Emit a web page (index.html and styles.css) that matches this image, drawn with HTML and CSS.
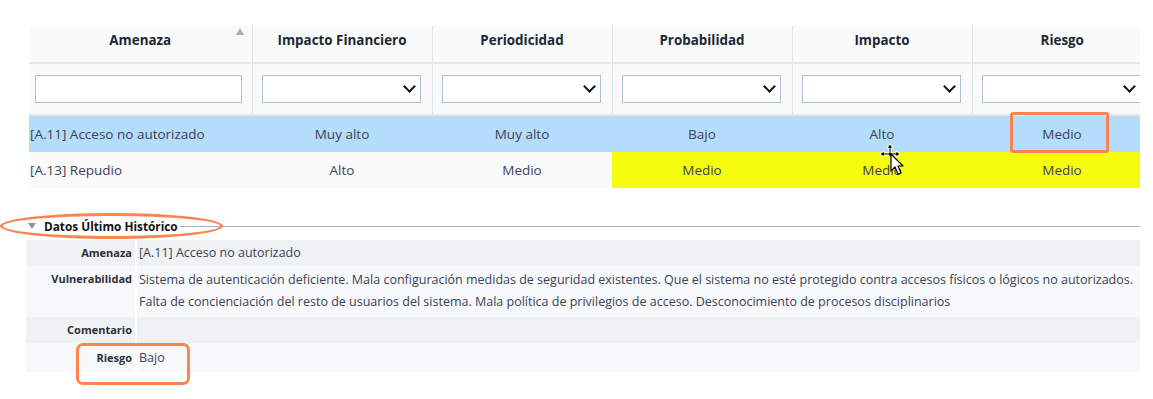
FILE: index.html
```html
<!DOCTYPE html>
<html lang="es">
<head>
    <meta charset="UTF-8">
    <title>Análisis de riesgos</title>
    <link rel="stylesheet" href="styles.css">
</head>
<body>
    <div class="page">
        <div class="grid-wrap">
            <table class="grid">
                <colgroup>
                    <col class="col-main">
                    <col class="col-level">
                    <col class="col-level">
                    <col class="col-level">
                    <col class="col-level">
                    <col class="col-level">
                </colgroup>
                <thead>
                    <tr class="head">
                        <th class="sortable">Amenaza <span class="sort-icon"></span></th>
                        <th>Impacto Financiero</th>
                        <th>Periodicidad</th>
                        <th>Probabilidad</th>
                        <th>Impacto</th>
                        <th>Riesgo</th>
                    </tr>
                    <tr class="filters">
                        <td><input type="text" class="filter-input"></td>
                        <td><div class="select-box"><select class="filter-select"><option></option></select></div></td>
                        <td><div class="select-box"><select class="filter-select"><option></option></select></div></td>
                        <td><div class="select-box"><select class="filter-select"><option></option></select></div></td>
                        <td><div class="select-box"><select class="filter-select"><option></option></select></div></td>
                        <td><div class="select-box"><select class="filter-select"><option></option></select></div></td>
                    </tr>
                </thead>
                <tbody>
                    <tr class="row selected">
                        <td class="name">[A.11] Acceso no autorizado</td>
                        <td>Muy alto</td>
                        <td>Muy alto</td>
                        <td>Bajo</td>
                        <td>Alto</td>
                        <td>Medio</td>
                    </tr>
                    <tr class="row">
                        <td class="name">[A.13] Repudio</td>
                        <td>Alto</td>
                        <td>Medio</td>
                        <td class="warn">Medio</td>
                        <td class="warn">Medio</td>
                        <td class="warn">Medio</td>
                    </tr>
                </tbody>
            </table>
        </div>

        <section class="history">
            <div class="legend">
                <span class="caret"></span>
                <span class="legend-title">Datos Último Histórico</span>
                <span class="legend-line"></span>
            </div>
            <table class="details">
                <tr>
                    <th>Amenaza</th>
                    <td>[A.11] Acceso no autorizado</td>
                </tr>
                <tr class="tall">
                    <th>Vulnerabilidad</th>
                    <td>Sistema de autenticación deficiente. Mala configuración medidas de seguridad existentes. Que el sistema no esté protegido contra accesos físicos o lógicos no autorizados. Falta de concienciación del resto de usuarios del sistema. Mala política de privilegios de acceso. Desconocimiento de procesos disciplinarios</td>
                </tr>
                <tr>
                    <th>Comentario</th>
                    <td></td>
                </tr>
                <tr class="last">
                    <th>Riesgo</th>
                    <td>Bajo</td>
                </tr>
            </table>
        </section>

        <!-- annotation marks drawn over the screenshot -->
        <div class="mark mark-cell"></div>
        <div class="mark mark-legend"></div>
        <div class="mark mark-riesgo"></div>

        <svg class="cursor" width="30" height="34" viewBox="0 0 30 34">
            <path d="M11 1 L14 5 L12 5 L12 10 L17 10 L17 8 L21 11 L17 14 L17 12 L12 12 L12 14 L10 14 L10 12 L5 12 L5 14 L1 11 L5 8 L5 10 L10 10 L10 5 L8 5 Z" fill="#000" stroke="#fff" stroke-width="1"/>
            <path d="M12 11 L12 28 L16 24 L19 31 L22 30 L19 23 L24 23 Z" fill="#fff" stroke="#000" stroke-width="1.2" stroke-linejoin="round"/>
        </svg>
    </div>
</body>
</html>
```

FILE: styles.css
```css
/* global */
* {
    margin: 0;
    padding: 0;
    box-sizing: border-box;
}

body {
    background: #fff;
    font-family: 'Open Sans', 'DejaVu Sans', sans-serif;
    color: #3c4257;
}

.page {
    position: relative;
    width: 1153px;
    height: 399px;
    padding-top: 26px;
}

/* main grid */
.grid-wrap {
    margin-left: 29px;
    width: 1111px;
    overflow: hidden;
}

.grid {
    table-layout: fixed;
    border-collapse: collapse;
    width: 1123px;
}

.col-main {
    width: 223px;
}

.col-level {
    width: 180px;
}

.head th {
    height: 37px;
    padding-bottom: 8px;
    background: #f9fafa;
    color: #1d2733;
    font-size: 13.4px;
    font-weight: 700;
    text-align: center;
    border-left: 1px solid #e1e6e6;
    border-bottom: 2px solid #e3e8e8;
    position: relative;
}

.head th:first-child {
    border-left: none;
}

.sort-icon {
    position: absolute;
    right: 8px;
    top: 2px;
    width: 0;
    height: 0;
    border-left: 4px solid transparent;
    border-right: 4px solid transparent;
    border-bottom: 7px solid #a3acb6;
}

.filters td {
    height: 52px;
    background: #fafafa;
    border-left: 1px solid #e1e6e6;
    border-bottom: 2px solid #e3e8e8;
    padding: 0 9px;
}

.filters td:first-child {
    border-left: none;
    padding: 0 10px 0 6px;
}

.filter-input {
    display: block;
    width: 207px;
    height: 28px;
    border: 1px solid #a9c1dc;
    background: #fff;
}

.select-box {
    position: relative;
    width: 159px;
    height: 28px;
}

.filter-select {
    appearance: none;
    -webkit-appearance: none;
    display: block;
    width: 100%;
    height: 100%;
    border: 1px solid #a9c1dc;
    background: #fff;
}

.select-box::after {
    content: "";
    position: absolute;
    right: 7px;
    top: 7px;
    width: 7px;
    height: 7px;
    border-right: 2px solid #111;
    border-bottom: 2px solid #111;
    transform: rotate(45deg);
    pointer-events: none;
}

.row td {
    height: 36px;
    font-size: 13.5px;
    text-align: center;
    background: #fafafa;
}

.row td.name {
    text-align: left;
    padding-left: 1px;
}

.row.selected td {
    height: 37px;
    background: #b4dcfb;
}

.row td.warn {
    background: #f5fc0e;
}

/* history section */
.history {
    margin-top: 28px;
    margin-left: 26px;
    width: 1114px;
}

.legend {
    display: flex;
    align-items: center;
    height: 20px;
}

.caret {
    width: 0;
    height: 0;
    margin-left: 2px;
    border-left: 4px solid transparent;
    border-right: 4px solid transparent;
    border-top: 6px solid #8d949b;
}

.legend-title {
    margin-left: 8px;
    font-size: 11.8px;
    font-weight: 700;
    color: #111;
}

.legend-line {
    flex: 1;
    height: 1px;
    margin-left: 2px;
    background: #9fb4c8;
}

.details {
    margin-top: 4px;
    width: 100%;
    table-layout: fixed;
    border-collapse: collapse;
    font-size: 12.5px;
}

.details th {
    width: 110px;
    padding: 5px 3px 0 0;
    text-align: right;
    font-size: 11px;
    font-weight: 700;
    color: #2b303a;
    border-right: 2px solid #fff;
    vertical-align: top;
}

.details td {
    padding: 2px 0 2px 2px;
    line-height: 22px;
    color: #3c4257;
    vertical-align: top;
}

.details tr {
    height: 26px;
}

.details tr.tall td {
    padding: 3px 0 4px 2px;
    line-height: 22px;
}

.details tr.last {
    height: 29px;
}

.details tr.last td {
    padding-top: 4px;
}

.details tr.last th {
    padding-top: 7px;
}

.details tr:nth-child(odd) {
    background: #eff1f3;
}

.details tr:nth-child(even) {
    background: #f7f8f9;
}

/* annotation marks */
.mark {
    position: absolute;
    border: 3px solid #fd8450;
}

.mark-cell {
    left: 1010px;
    top: 112px;
    width: 99px;
    height: 41px;
    border-radius: 3px;
}

.mark-legend {
    left: 0;
    top: 213px;
    width: 223px;
    height: 26px;
    border-radius: 50%;
}

.mark-riesgo {
    left: 76px;
    top: 343px;
    width: 114px;
    height: 42px;
    border-radius: 7px;
}

.cursor {
    position: absolute;
    left: 879px;
    top: 143px;
}
```
